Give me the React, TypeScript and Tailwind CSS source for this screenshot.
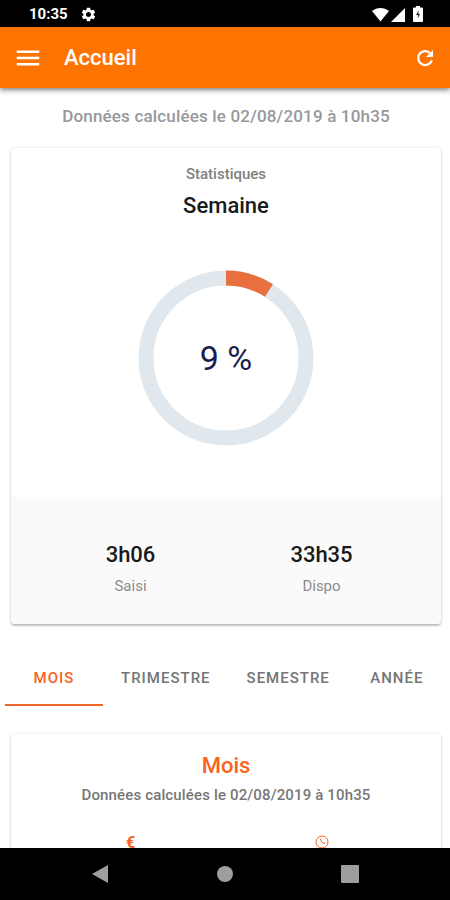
import { useState } from 'react';
import { MdMenu, MdSettings } from 'react-icons/md';

const FONT = "font-['Roboto','Liberation_Sans',sans-serif]";

const UPDATED_AT = 'Données calculées le 02/08/2019 à 10h35';

const tabs = ['Mois', 'Trimestre', 'Semestre', 'Année'];

const weekStats = [
  { value: '3h06', label: 'Saisi' },
  { value: '33h35', label: 'Dispo' },
];

function StatusBar() {
  return (
    <div className="flex h-[27px] shrink-0 items-center justify-between bg-black pt-px pl-[29px] pr-[27px] text-white">
      <div className="flex items-center gap-3">
        <span className="text-[15px] font-bold leading-5">10:35</span>
        <MdSettings size={17} />
      </div>
      <div className="flex items-center">
        {/* Wifi */}
        <svg width="17" height="15" viewBox="0 0 17 15" fill="currentColor">
          <path d="M0 4C5 0 12 0 17 4L8.500 14.500z" />
        </svg>
        {/* Signal */}
        <svg className="ml-0.5" width="14" height="15" viewBox="0 0 14 15" fill="currentColor">
          <path d="M14 1V15H0z" />
        </svg>
        {/* Battery */}
        <svg className="ml-2" width="10" height="16" viewBox="0 0 10 16">
          <path fill="currentColor" d="M3 0h4v1.500h2q1 0 1 1V15q0 1-1 1H1q-1 0-1-1V2.500q0-1 1-1h2z" />
          <path fill="#333" d="M5.500 4.500L3 9h1.800V12.500L7 8H5.500z" />
        </svg>
      </div>
    </div>
  );
}

function Header() {
  return (
    <header className="relative z-10 flex h-[61px] shrink-0 items-center bg-[#ff7300] px-[13px] text-white shadow-[0_2px_5px_rgba(0,0,0,0.5)]">
      <button type="button" aria-label="Menu">
        <MdMenu size={30} />
      </button>
      <h1 className="ml-[21px] flex-1 text-[22px] font-medium leading-7">Accueil</h1>
      <button type="button" aria-label="Actualiser">
        <svg width="24" height="24" viewBox="0 0 24 24" fill="none">
          <path d="M18.800 14.300A7 7 0 1 1 17 7" stroke="currentColor" strokeWidth="2.300" />
          <path d="M20 4V11H13z" fill="currentColor" />
        </svg>
      </button>
    </header>
  );
}

function ProgressRing({ percent }: { percent: number }) {
  const radius = 80;
  const length = 2 * Math.PI * radius;

  return (
    <div className="relative size-[176px]">
      <svg className="size-full -rotate-90" viewBox="0 0 176 176" fill="none" strokeWidth="15">
        <circle cx="88" cy="88" r={radius} stroke="#e0e8ed" />
        <circle
          cx="88"
          cy="88"
          r={radius}
          stroke="#e8703f"
          strokeDasharray={`${(length * percent) / 100} ${length}`}
        />
      </svg>
      <span className="absolute inset-0 flex items-center justify-center text-[34px] text-[#1a1d4d]">
        {percent} %
      </span>
    </div>
  );
}

function WeekCard() {
  return (
    <section className="overflow-hidden rounded bg-white shadow-[0_2px_2px_rgba(0,0,0,0.22),0_0_3px_rgba(0,0,0,0.14)]">
      <div className="flex flex-col items-center pt-4 pb-[51px]">
        <p className="text-[15px] font-medium leading-5 text-[#808080]">Statistiques</p>
        <h2 className="mt-2 text-[22px] font-medium leading-7 text-[#1a1a1a]">Semaine</h2>
        <div className="mt-[50px]">
          <ProgressRing percent={9} />
        </div>
      </div>
      <dl className="flex bg-[#fafafa] px-6 pt-11 pb-7">
        {weekStats.map((stat) => (
          <div key={stat.label} className="flex flex-1 flex-col-reverse items-center gap-[7px]">
            <dt className="text-[15px] leading-5 text-[#8c8c8c]">{stat.label}</dt>
            <dd className="text-[22px] font-medium leading-7 text-[#1a1a1a]">{stat.value}</dd>
          </div>
        ))}
      </dl>
    </section>
  );
}

function MonthCard({ title }: { title: string }) {
  return (
    <section className="mt-7 rounded bg-white pt-[18px] pb-40 text-center shadow-[0_2px_2px_rgba(0,0,0,0.22),0_0_3px_rgba(0,0,0,0.14)]">
      <h2 className="text-[22px] font-medium leading-7 text-[#f9631b]">{title}</h2>
      <p className="mt-[5px] text-[15px] font-medium leading-5 tracking-[0.01em] text-[#777777]">{UPDATED_AT}</p>
      <div className="mt-7 flex px-6 text-[#f9631b]">
        <span className="flex-1 text-base font-bold leading-5">€</span>
        <span className="flex flex-1 justify-center pt-0.5">
          <svg width="14" height="14" viewBox="0 0 14 14" fill="none" stroke="currentColor">
            <circle cx="7" cy="7" r="6" />
            <path d="M5 3.500L7 7.500L10 8.500" />
          </svg>
        </span>
      </div>
    </section>
  );
}

function SystemNav() {
  return (
    <nav className="flex h-[52px] shrink-0 items-center justify-between bg-black px-[91px] text-[#9e9e9e]">
      <button type="button" aria-label="Retour">
        <svg width="18" height="20" viewBox="0 0 18 20" fill="currentColor">
          <path d="M17 1V19L1 10z" />
        </svg>
      </button>
      <button type="button" aria-label="Écran d'accueil" className="size-4 rounded-full bg-[#9e9e9e]" />
      <button type="button" aria-label="Applications récentes" className="size-[18px] rounded-[1px] bg-[#9e9e9e]" />
    </nav>
  );
}

export default function App() {
  const [activeTab, setActiveTab] = useState('Mois');

  return (
    <div className={`flex h-screen flex-col bg-white ${FONT}`}>
      <StatusBar />
      <Header />
      <main className="min-h-0 flex-1 overflow-hidden pl-[11px] pr-[9px]">
        <p className="pt-4 pb-5 text-center text-[17px] font-medium leading-6 tracking-[0.01em] text-[#96989c]">
          {UPDATED_AT}
        </p>
        <WeekCard />
        <div role="tablist" className="-mx-1.5 mt-6 flex">
          {tabs.map((tab) => (
            <button
              key={tab}
              type="button"
              role="tab"
              aria-selected={activeTab === tab}
              onClick={() => setActiveTab(tab)}
              className={`h-[58px] min-w-[98px] border-b-2 px-[18px] pt-[3px] text-[15px] font-medium uppercase leading-5 tracking-[1px] ${
                activeTab === tab ? 'border-[#f0662a] text-[#f9631b]' : 'border-transparent text-[#757575]'
              }`}
            >
              {tab}
            </button>
          ))}
        </div>
        <MonthCard title={activeTab} />
      </main>
      <SystemNav />
    </div>
  );
}
